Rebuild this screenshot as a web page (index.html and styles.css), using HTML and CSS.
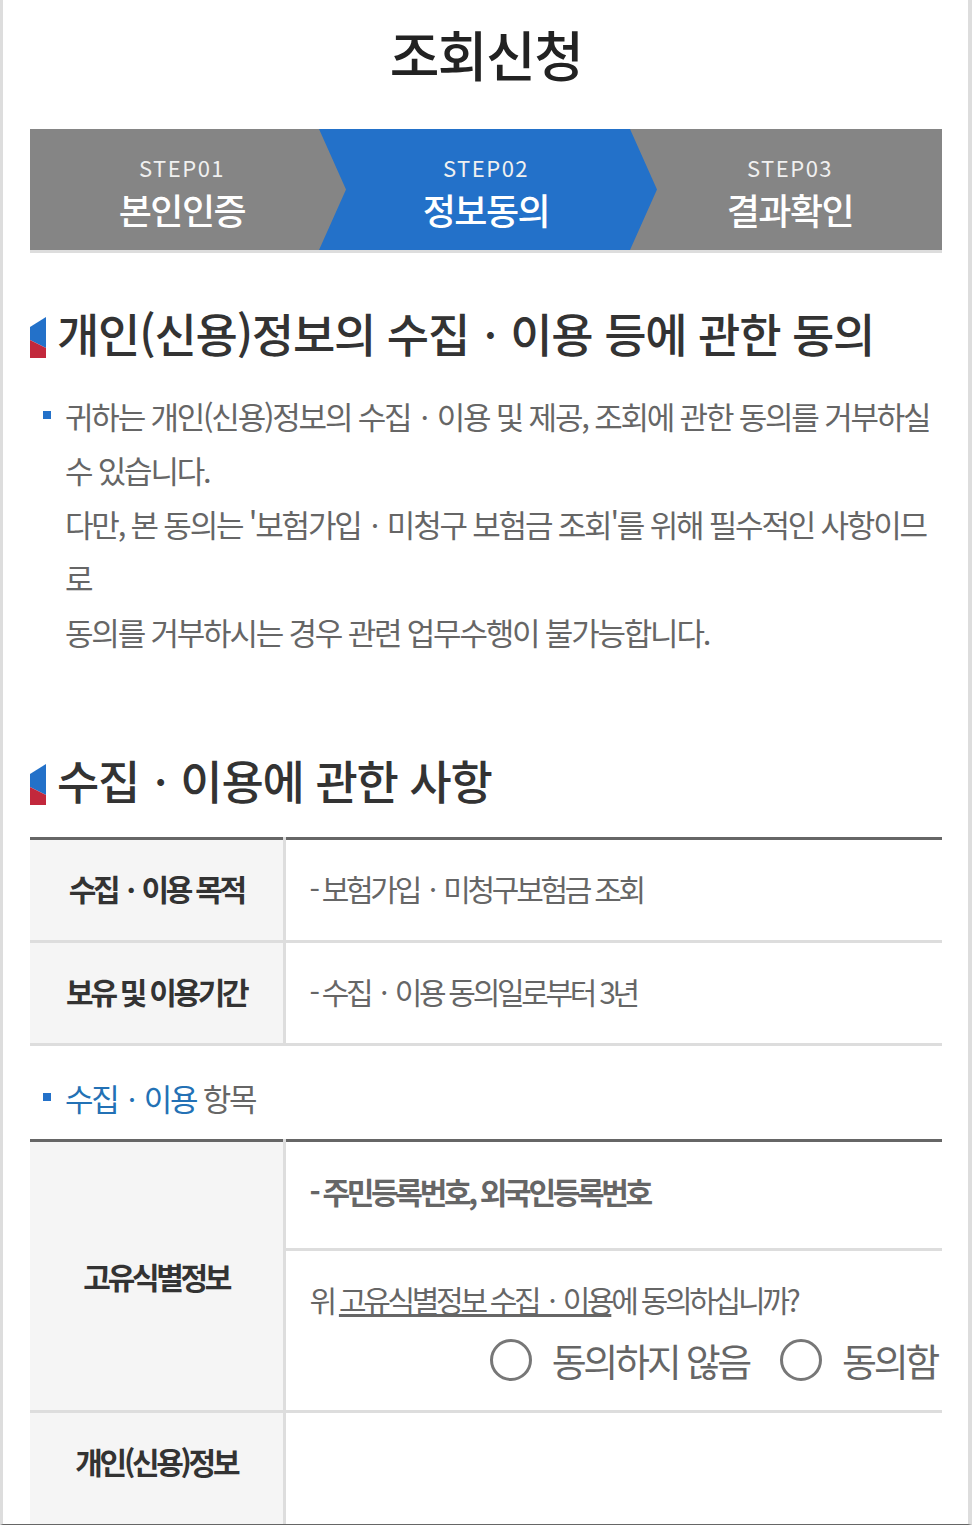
FILE: index.html
```html
<!DOCTYPE html>
<html lang="ko">
<head>
    <meta charset="UTF-8">
    <meta name="viewport" content="width=device-width, initial-scale=1.0">
    <title>조회신청</title>
    <link rel="stylesheet" href="styles.css">
</head>
<body>
    <div class="page">
        <h1 class="page-title">조회신청</h1>

        <div class="steps">
            <div class="step">
                <span class="step-num">STEP01</span>
                <strong class="step-name">본인인증</strong>
            </div>
            <div class="step step-on">
                <span class="step-num">STEP02</span>
                <strong class="step-name">정보동의</strong>
            </div>
            <div class="step">
                <span class="step-num">STEP03</span>
                <strong class="step-name">결과확인</strong>
            </div>
        </div>

        <h2 class="sec-title">
            <svg class="sec-icon" viewBox="0 0 16 41" aria-hidden="true">
                <polygon points="0,10 16,0 16,31 0,23" fill="#2371c9"/>
                <polygon points="0,23 16,31 16,41 0,41" fill="#c2283c"/>
            </svg>
            개인(신용)정보의 수집ㆍ이용 등에 관한 동의
        </h2>
        <p class="notice">귀하는 개인(신용)정보의 수집ㆍ이용 및 제공, 조회에 관한 동의를 거부하실 수 있습니다.<br>다만, 본 동의는 '보험가입ㆍ미청구 보험금 조회'를 위해 필수적인 사항이므로<br>동의를 거부하시는 경우 관련 업무수행이 불가능합니다.</p>

        <h2 class="sec-title sec-title-second">
            <svg class="sec-icon" viewBox="0 0 16 41" aria-hidden="true">
                <polygon points="0,10 16,0 16,31 0,23" fill="#2371c9"/>
                <polygon points="0,23 16,31 16,41 0,41" fill="#c2283c"/>
            </svg>
            수집ㆍ이용에 관한 사항
        </h2>
        <table class="info-table">
            <tr class="row-purpose">
                <th>수집ㆍ이용 목적</th>
                <td>- 보험가입ㆍ미청구보험금 조회</td>
            </tr>
            <tr class="row-period">
                <th>보유 및 이용기간</th>
                <td>- 수집ㆍ이용 동의일로부터 3년</td>
            </tr>
        </table>

        <p class="sub-title"><em>수집ㆍ이용</em> 항목</p>
        <table class="info-table">
            <tr class="row-items">
                <th rowspan="2">고유식별정보</th>
                <td><b>- 주민등록번호, 외국인등록번호</b></td>
            </tr>
            <tr>
                <td class="agree-cell">
                    <p class="agree-text">위 <u>고유식별정보 수집ㆍ이용</u>에 동의하십니까?</p>
                    <div class="agree-options">
                        <label class="radio"><i></i>동의하지 않음</label>
                        <label class="radio"><i></i>동의함</label>
                    </div>
                </td>
            </tr>
            <tr class="row-credit">
                <th>개인(신용)정보</th>
                <td></td>
            </tr>
        </table>
    </div>
</body>
</html>
```

FILE: styles.css
```css
* {
    margin: 0;
    padding: 0;
    box-sizing: border-box;
}

html, body {
    height: 1525px;
    overflow: hidden;
    background: #fff;
}

body {
    font-family: "Noto Sans CJK KR", "Noto Sans", sans-serif;
    color: #666;
}

.page {
    height: 1525px;
    padding: 0 26px 0 27px;
    border-left: 3px solid #ddd;
    border-right: 4px solid #ddd;
    border-bottom: 1px solid #666;
    overflow: hidden;
}

.page-title {
    height: 129px;
    padding-top: 19px;
    text-align: center;
    font-size: 54px;
    line-height: 70px;
    font-weight: 500;
    letter-spacing: -1.5px;
    color: #222;
}

.steps {
    position: relative;
    display: grid;
    grid-template-columns: repeat(3, 1fr);
    height: 124px;
    background: #858585;
    border-bottom: 3px solid #ddd;
}

.step {
    position: relative;
    display: flex;
    flex-direction: column;
    align-items: center;
    padding-top: 22px;
    color: #fff;
}

.step-on::before {
    content: "";
    position: absolute;
    top: 0;
    bottom: 0;
    left: -15px;
    right: -19px;
    background: #2371c9;
    clip-path: polygon(0 0, 311px 0, 100% 50%, 311px 100%, 0 100%, 27px 50%);
}

.step-num, .step-name {
    position: relative;
}

.step-num {
    font-size: 22px;
    line-height: 32px;
    letter-spacing: 1.5px;
    color: #f0f0f0;
}

.step-name {
    font-size: 36px;
    line-height: 52px;
    font-weight: 500;
    letter-spacing: -1.5px;
}

.sec-title {
    display: flex;
    align-items: center;
    gap: 11px;
    margin-top: 47px;
    height: 64px;
    font-size: 46px;
    line-height: 64px;
    font-weight: 500;
    letter-spacing: -1.2px;
    color: #333;
}

.sec-title-second {
    margin-top: 88px;
}

.sec-icon {
    flex: none;
    width: 16px;
    height: 41px;
    margin-top: 10px;
}

.notice {
    position: relative;
    margin-top: 25px;
    padding-left: 35px;
    font-size: 31px;
    line-height: 54px;
    letter-spacing: -2.2px;
}

.notice::before, .sub-title::before {
    content: "";
    position: absolute;
    left: 13px;
    top: 22px;
    width: 8px;
    height: 8px;
    background: #2371c9;
}

.info-table {
    width: 100%;
    margin-top: 26px;
    border-collapse: collapse;
    table-layout: fixed;
    border-top: 3px solid #666;
    font-size: 30px;
    letter-spacing: -3.3px;
}

.info-table th {
    width: 254px;
    background: #f5f5f5;
    border-right: 3px solid #ddd;
    border-bottom: 3px solid #ddd;
    font-weight: 700;
    color: #333;
    text-align: center;
}

.info-table td {
    padding-left: 24px;
    border-bottom: 3px solid #ddd;
}

.row-purpose th, .row-purpose td,
.row-period th, .row-period td {
    height: 103px;
    padding-bottom: 4px;
}

.row-items td {
    height: 109px;
    padding-bottom: 8px;
}

.info-table td b {
    font-weight: 700;
}

.sub-title {
    position: relative;
    margin-top: 25px;
    padding-left: 35px;
    height: 54px;
    font-size: 31px;
    line-height: 54px;
    letter-spacing: -2.25px;
}

.sub-title + .info-table {
    margin-top: 14px;
}

.sub-title em {
    font-style: normal;
    color: #2371b5;
}

.agree-cell {
    height: 162px;
    vertical-align: top;
    padding-top: 23px;
}

.agree-text {
    line-height: 50px;
}

.agree-text u {
    text-decoration-thickness: 3px;
}

.agree-options {
    display: flex;
    justify-content: flex-end;
    gap: 31px;
    margin-top: 8px;
    padding-right: 5px;
    font-size: 38px;
    line-height: 56px;
    letter-spacing: -3.3px;
}

.radio {
    display: flex;
    align-items: center;
    gap: 20px;
}

.radio i {
    width: 42px;
    height: 42px;
    border: 3px solid #777;
    border-radius: 50%;
}

.row-credit th {
    height: 130px;
    vertical-align: top;
    padding-top: 26px;
    border-bottom: 0;
}

.row-credit td {
    border-bottom: 0;
}
```
